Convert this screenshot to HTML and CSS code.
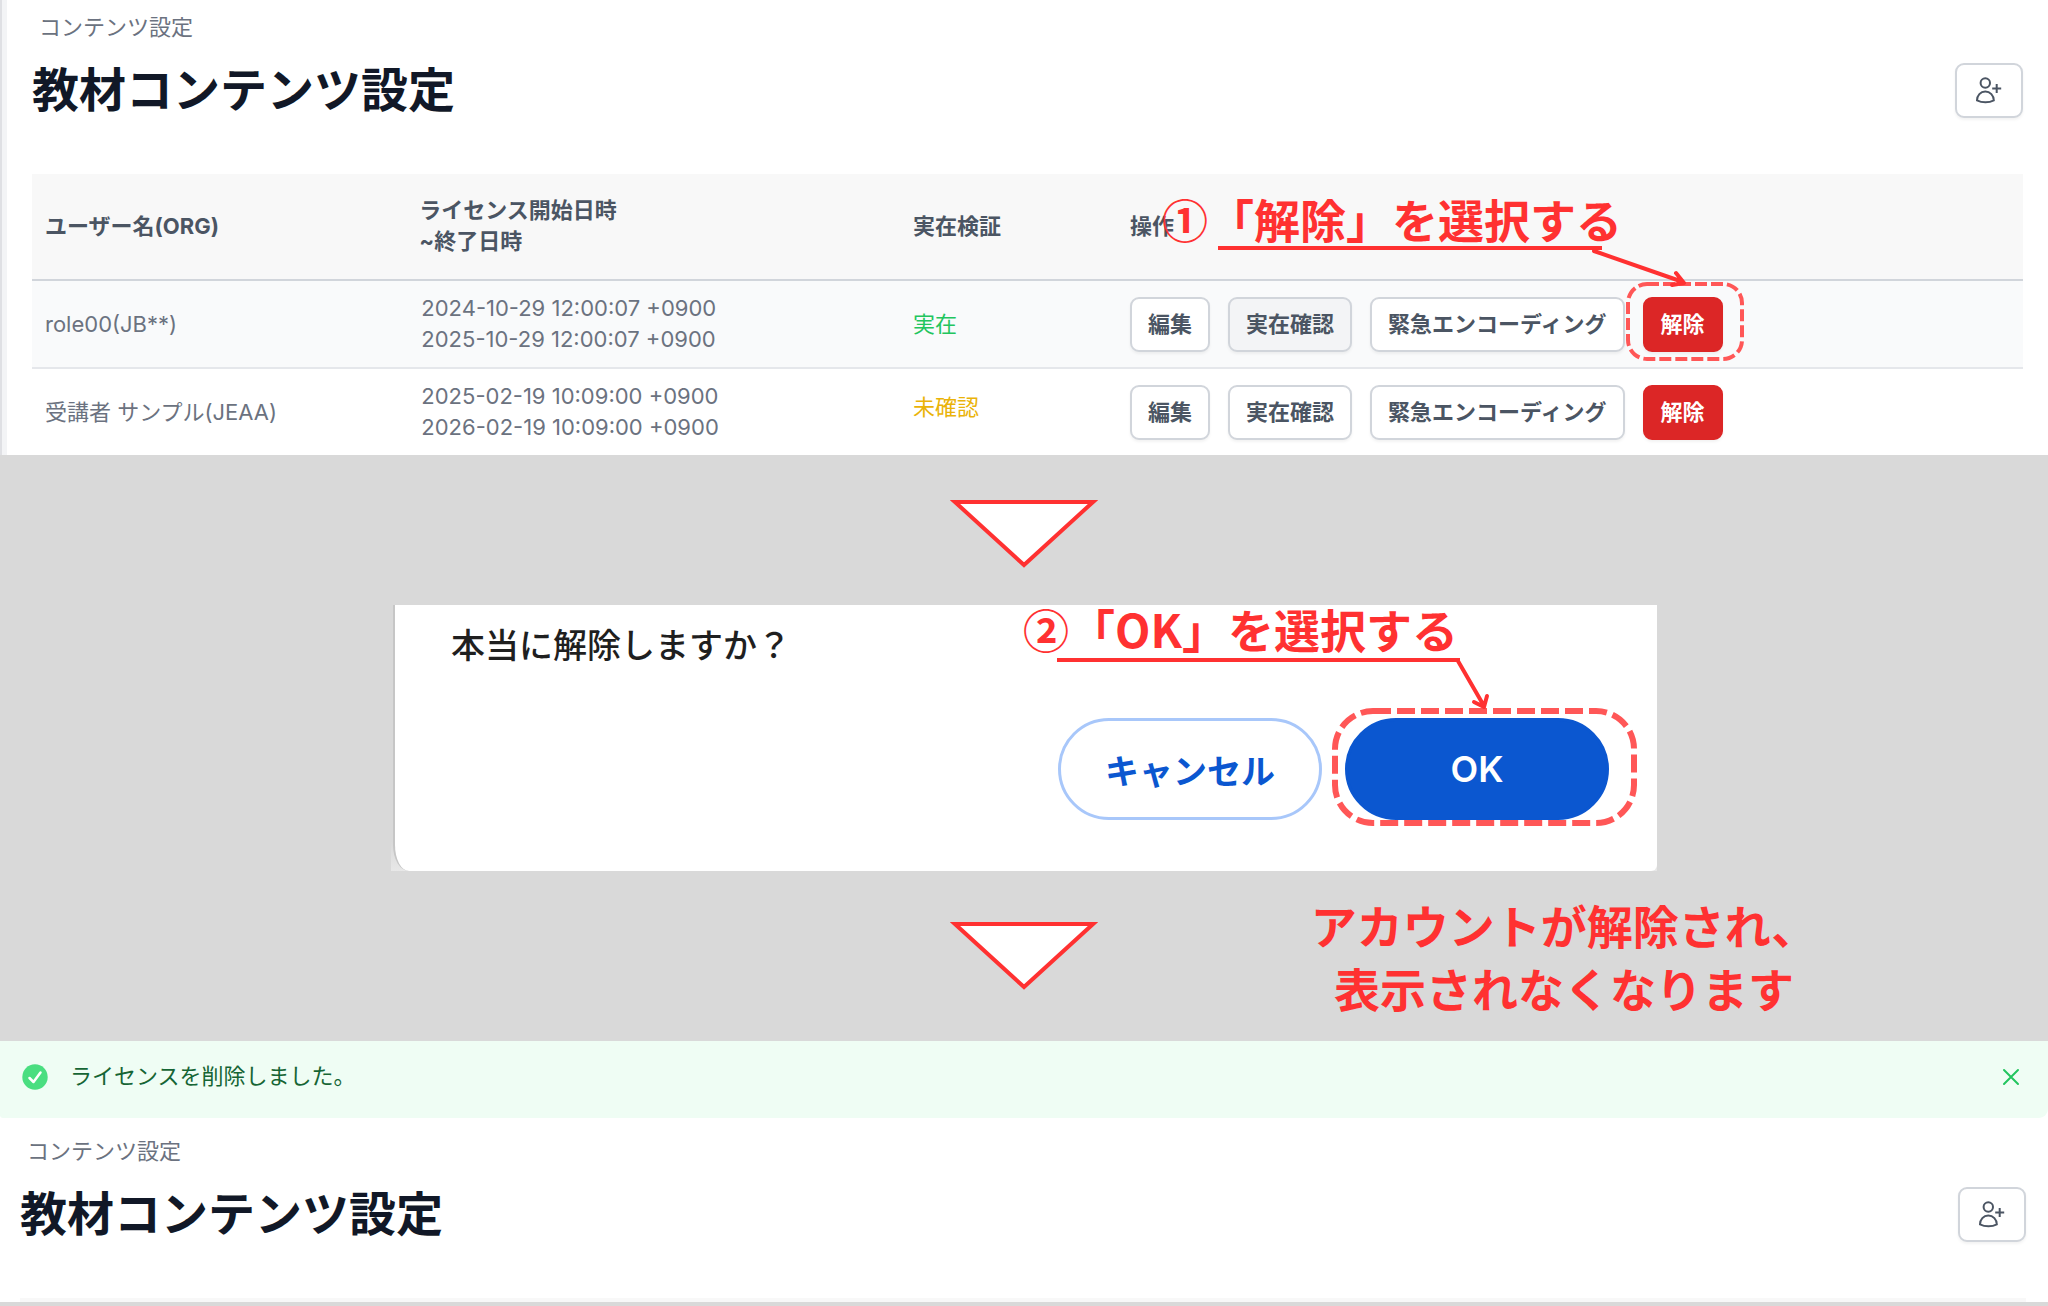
FILE: index.html
```html
<!DOCTYPE html>
<html lang="ja">
<head>
  <meta charset="UTF-8" />
  <meta name="viewport" content="width=device-width, initial-scale=1" />
  <title>教材コンテンツ設定</title>
  <link rel="stylesheet" href="styles.css">
</head>
<body>

<!-- ライセンス一覧 -->
<section class="panel panel-list">
  <div class="breadcrumb">コンテンツ設定</div>
  <div class="page-head">
    <h1>教材コンテンツ設定</h1>
    <button class="btn btn-icon" type="button" aria-label="ユーザー追加">
      <svg class="icon-user" viewBox="0 0 28 28" aria-hidden="true">
        <circle cx="10.3" cy="7" r="4.7"/>
        <path d="M2 24.3C2 19.5 5.500 15.500 10.300 15.500S18.800 19.500 18.800 24.300C14 27 7 27 2 24.300Z"/>
        <path d="M21.700 8V17M17.200 12.500H26.200"/>
      </svg>
    </button>
  </div>

  <table class="licenses">
    <thead>
      <tr>
        <th class="col-user">ユーザー名(ORG)</th>
        <th class="col-date">ライセンス開始日時<br>~終了日時</th>
        <th class="col-status">実在検証</th>
        <th class="col-actions">操作
          <div class="note note-release">
            <span class="note-text">①「解除」を選択する</span>
            <svg class="note-line" width="480" height="50" aria-hidden="true">
              <path class="line" d="M0 6H384"/>
              <path class="arrow" d="M376 9L465 40M458 31L466 41L454 43"/>
            </svg>
          </div>
        </th>
      </tr>
    </thead>
    <tbody>
      <tr class="row-active">
        <td>role00(JB**)</td>
        <td class="dates">2024-10-29 12:00:07 +0900<br>2025-10-29 12:00:07 +0900</td>
        <td><span class="status-ok">実在</span></td>
        <td>
          <div class="actions">
            <button class="btn" type="button">編集</button>
            <button class="btn btn-muted" type="button">実在確認</button>
            <button class="btn" type="button">緊急エンコーディング</button>
            <div class="marked">
              <button class="btn btn-danger" type="button">解除</button>
              <svg class="ring ring-release" aria-hidden="true"><rect x="2" y="2" width="114" height="75" rx="19"/></svg>
            </div>
          </div>
        </td>
      </tr>
      <tr>
        <td>受講者 サンプル(JEAA)</td>
        <td class="dates">2025-02-19 10:09:00 +0900<br>2026-02-19 10:09:00 +0900</td>
        <td><span class="status-pending">未確認</span></td>
        <td>
          <div class="actions">
            <button class="btn" type="button">編集</button>
            <button class="btn" type="button">実在確認</button>
            <button class="btn" type="button">緊急エンコーディング</button>
            <button class="btn btn-danger" type="button">解除</button>
          </div>
        </td>
      </tr>
    </tbody>
  </table>
</section>

<div class="step">
  <svg class="triangle" viewBox="0 0 148 70" aria-hidden="true"><path d="M5 3H143L74 66Z"/></svg>
</div>

<!-- 確認ダイアログ -->
<div class="dialog-frame">
  <div class="dialog" role="dialog" aria-labelledby="dialogText">
    <p id="dialogText">本当に解除しますか？</p>
    <div class="dialog-buttons">
      <button class="pill" type="button">キャンセル</button>
      <div class="marked">
        <button class="pill pill-primary" type="button">OK</button>
        <svg class="ring ring-ok" aria-hidden="true"><rect x="3" y="3" width="299" height="112" rx="38"/></svg>
      </div>
    </div>
  </div>
  <div class="note note-ok">
    <span class="note-text">②「OK」を選択する</span>
    <svg class="note-line" width="440" height="60" aria-hidden="true">
      <path class="line" d="M0 5H403"/>
      <path class="arrow" d="M401 6L427 51M417 47L427 52L430 41"/>
    </svg>
  </div>
</div>

<div class="step step-result">
  <svg class="triangle" viewBox="0 0 148 70" aria-hidden="true"><path d="M5 3H143L74 66Z"/></svg>
  <p class="result-text">アカウントが解除され、<br>表示されなくなります</p>
</div>

<!-- 解除後の画面 -->
<section class="panel panel-done">
  <div class="alert" role="status">
    <svg class="icon-check" viewBox="0 0 26 26" aria-hidden="true">
      <circle cx="13" cy="13" r="12.7"/>
      <path d="M7.500 14L11.500 18L18.500 8.500"/>
    </svg>
    <span>ライセンスを削除しました。</span>
    <button class="alert-close" type="button" aria-label="閉じる">
      <svg viewBox="0 0 18 18" aria-hidden="true"><path d="M2 2L16 16M16 2L2 16"/></svg>
    </button>
  </div>
  <div class="done-body">
    <div class="breadcrumb">コンテンツ設定</div>
    <div class="page-head">
      <h1>教材コンテンツ設定</h1>
      <button class="btn btn-icon" type="button" aria-label="ユーザー追加">
        <svg class="icon-user" viewBox="0 0 28 28" aria-hidden="true">
          <circle cx="10.3" cy="7" r="4.7"/>
          <path d="M2 24.3C2 19.5 5.500 15.500 10.300 15.500S18.800 19.500 18.800 24.300C14 27 7 27 2 24.300Z"/>
          <path d="M21.700 8V17M17.200 12.500H26.200"/>
        </svg>
      </button>
    </div>
    <div class="table-edge"></div>
  </div>
</section>

</body>
</html>
```

FILE: styles.css
```css
* {
  box-sizing: border-box;
}
body {
  margin: 0;
  background: #d9d9d9;
  color: #6b7280;
  font-family: Inter, "Noto Sans CJK JP", sans-serif;
  font-size: 22px;
  line-height: 31px;
}
h1, p {
  margin: 0;
}
button {
  font-family: inherit;
  cursor: pointer;
}

/* panels */
.panel {
  background: #fff;
}
.panel-list {
  padding: 12px 25px 0 30px;
  border-left: 2px solid #dfe0e4;
  box-shadow: inset 5px 0 #f3f4f6;
}
.breadcrumb {
  padding-left: 7px;
}
.page-head {
  display: flex;
  align-items: center;
  justify-content: space-between;
  margin: 19px 0 56px;
}
.page-head h1 {
  color: #111827;
  font-size: 47px;
  line-height: 56px;
  font-weight: 700;
}

/* buttons */
.btn {
  height: 55px;
  padding: 0 16px 5px;
  border: 2px solid #d1d5db;
  border-radius: 9px;
  background: #fff;
  color: #4b5563;
  font-size: 22px;
  font-weight: 700;
  white-space: nowrap;
  box-shadow: 0 2px 3px rgba(0, 0, 0, 0.05);
}
.btn-muted {
  background: #f3f4f6;
}
.btn-danger {
  background: #dc2626;
  border-color: #dc2626;
  color: #fff;
}
.btn-icon {
  display: flex;
  align-items: center;
  justify-content: center;
  width: 68px;
  padding: 0;
}
.icon-user {
  width: 28px;
  height: 28px;
  flex: none;
  fill: none;
  stroke: #4b5563;
  stroke-width: 2;
}

/* table */
.licenses {
  width: 100%;
  table-layout: fixed;
  border-collapse: separate;
  border-spacing: 0;
}
.licenses th {
  padding: 21px 13px 22px;
  background: #f8f8f8;
  border-bottom: 2px solid #d1d5db;
  color: #4b5563;
  font-weight: 700;
  text-align: left;
}
.licenses td {
  padding: 16px 13px 15px;
}
.col-user {
  width: 18.8%;
}
.col-date {
  width: 24.8%;
}
.col-status {
  width: 10.9%;
}
.col-actions {
  position: relative;
}
.row-active td {
  background: #f9fafb;
  border-bottom: 2px solid #e5e7eb;
}
.licenses .dates {
  padding: 0 15px;
}
.actions {
  display: flex;
  gap: 18px;
}
.status-ok {
  color: #22c55e;
}
.status-pending {
  display: block;
  padding-bottom: 10px;
  color: #eab308;
}

/* red notes over the screens */
.note {
  position: absolute;
  z-index: 2;
  color: #ff3131;
  font-family: "Noto Sans CJK JP", sans-serif;
  font-weight: 700;
  font-size: 46px;
  line-height: 60px;
  white-space: nowrap;
  pointer-events: none;
}
.note-line {
  position: absolute;
  fill: none;
  stroke: #ff3131;
  stroke-width: 4;
}
.note-line .arrow {
  stroke-linecap: round;
  stroke-linejoin: round;
}
.note-release {
  top: 14px;
  left: 45px;
}
.note-release .note-line {
  top: 54px;
  left: 56px;
}
.marked {
  position: relative;
}
.ring {
  position: absolute;
  fill: none;
  stroke: #ff5757;
  pointer-events: none;
}
.ring-release {
  top: -15px;
  left: -17px;
  width: 118px;
  height: 79px;
  stroke-width: 4;
  stroke-dasharray: 12 4;
}
.ring-ok {
  top: -10px;
  left: -13px;
  width: 305px;
  height: 118px;
  stroke-width: 6;
  stroke-dasharray: 18 6;
}

/* steps between screens */
.step {
  display: flex;
  justify-content: center;
  padding: 44px 0 36px;
}
.triangle {
  width: 148px;
  height: 70px;
  fill: #fff;
  stroke: #ff3131;
  stroke-width: 4;
}
.step-result {
  display: grid;
  grid-template-columns: 1fr auto 1fr;
  align-items: center;
  padding: 22px 0;
}
.step-result .triangle {
  grid-column: 2;
}
.result-text {
  padding-right: 18px;
  color: #ff3131;
  font-family: "Noto Sans CJK JP", sans-serif;
  font-size: 46px;
  line-height: 63px;
  font-weight: 700;
  text-align: center;
}

/* dialog */
.dialog-frame {
  position: relative;
  max-width: 1266px;
  margin: 0 auto;
  padding-left: 2px;
  background: linear-gradient(to top, #e8e8e8, #d9d9d9 30px);
}
.dialog {
  padding: 14px 48px 51px 56px;
  background: #fff;
  border-left: 2px solid #c6c6c6;
  border-radius: 0 0 6px 16px / 0 0 6px 26px;
}
.dialog p {
  color: #1f1f1f;
  font-family: "Noto Sans CJK JP", sans-serif;
  font-size: 34px;
  line-height: 50px;
  font-weight: 500;
}
.dialog-buttons {
  display: flex;
  justify-content: flex-end;
  gap: 23px;
  margin-top: 49px;
}
.pill {
  display: block;
  width: 264px;
  height: 102px;
  border: 3px solid #a8c7fa;
  border-radius: 51px;
  background: #fff;
  color: #0b57d0;
  font-size: 34px;
  font-weight: 600;
}
.pill-primary {
  background: #0b57d0;
  border-color: #0b57d0;
  color: #fff;
  font-size: 36px;
}
.note-ok {
  top: -7px;
  right: 156px;
  width: 478px;
}
.note-ok .note-line {
  top: 57px;
  left: 34px;
}

/* finished screen */
.alert {
  display: flex;
  align-items: center;
  padding: 20px 28px 26px 22px;
  background: #effdf4;
  border-radius: 0 0 9px 3px;
  color: #166534;
}
.icon-check {
  width: 26px;
  height: 26px;
  margin-right: 22px;
  fill: #4ade80;
}
.icon-check path {
  fill: none;
  stroke: #fff;
  stroke-width: 2.5;
  stroke-linecap: round;
  stroke-linejoin: round;
}
.alert-close {
  display: flex;
  margin-left: auto;
  padding: 0;
  border: 0;
  background: none;
}
.alert-close svg {
  width: 18px;
  height: 18px;
  stroke: #22c55e;
  stroke-width: 2;
  stroke-linecap: round;
}
.done-body {
  padding: 18px 22px 0 20px;
}
.table-edge {
  height: 4px;
  background: #f8f8f8;
}
```
